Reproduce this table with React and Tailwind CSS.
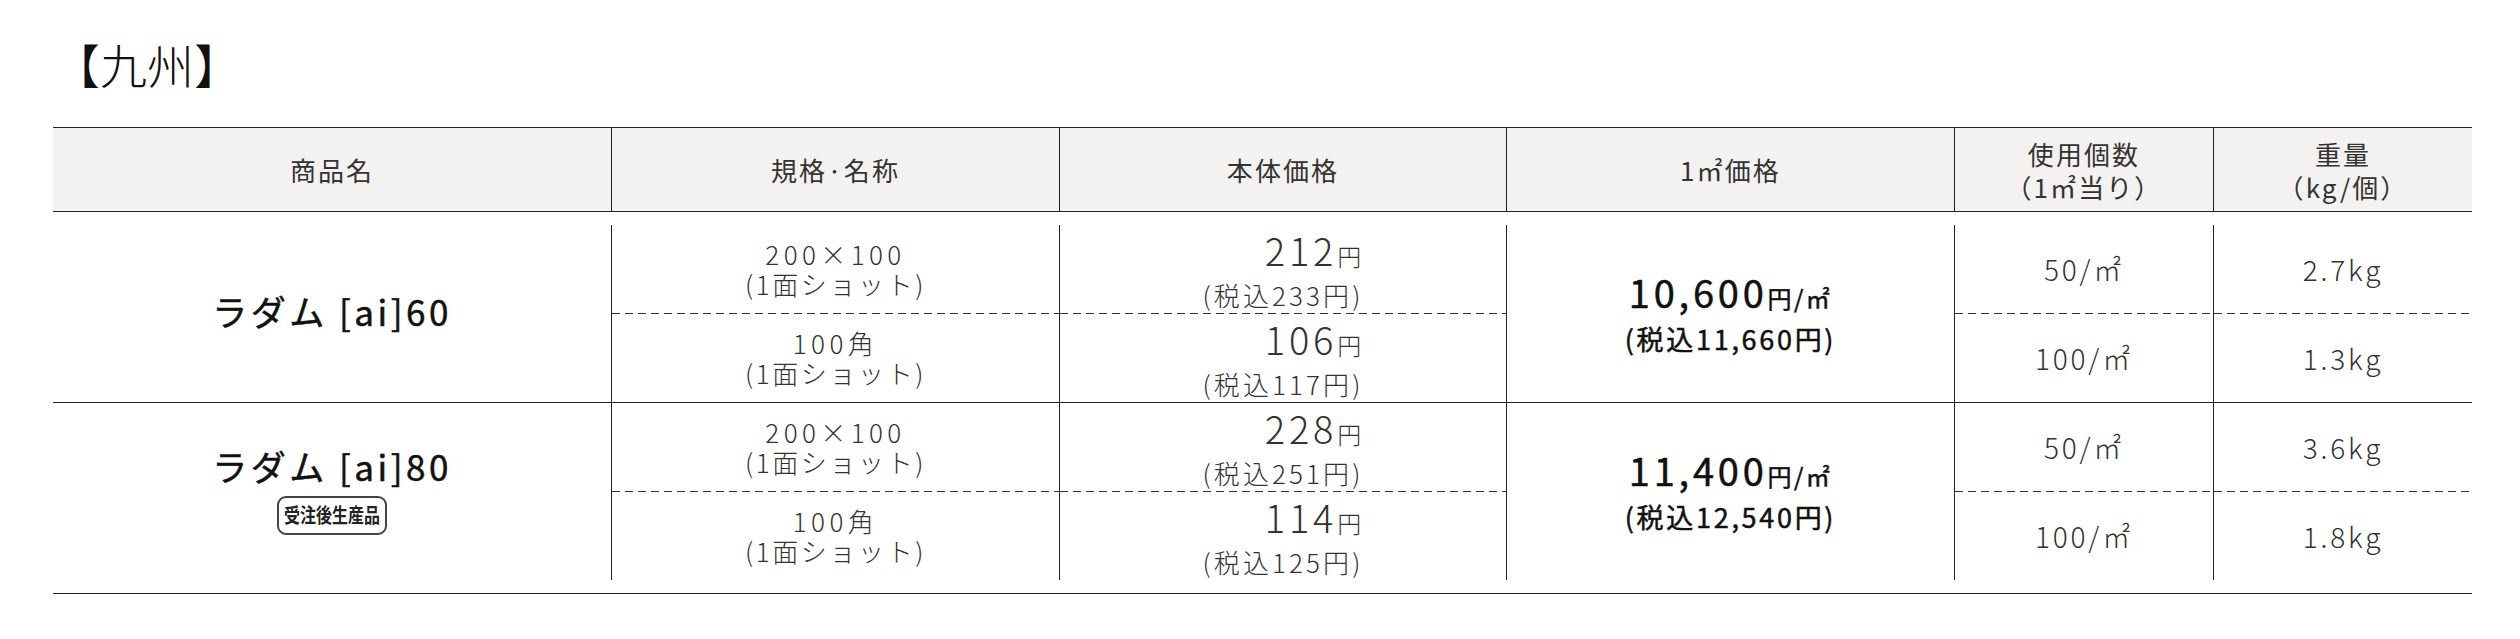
const cols = 'grid grid-cols-[558px_448px_447px_448px_259px_259px]';

const rows = [
  {
    name: 'ラダム [ai]60',
    badge: false,
    sqm: '10,600',
    sqmTax: '11,660',
    subs: [
      { spec: '200×100', price: '212', tax: '233', count: '50', weight: '2.7kg' },
      { spec: '100角', price: '106', tax: '117', count: '100', weight: '1.3kg' },
    ],
  },
  {
    name: 'ラダム [ai]80',
    badge: true,
    sqm: '11,400',
    sqmTax: '12,540',
    subs: [
      { spec: '200×100', price: '228', tax: '251', count: '50', weight: '3.6kg' },
      { spec: '100角', price: '114', tax: '125', count: '100', weight: '1.8kg' },
    ],
  },
];

function Dashed() {
  return (
    <div className="h-px shrink-0 bg-[linear-gradient(to_right,#333_8px,transparent_8px)] bg-[length:13px_1px]" />
  );
}

// two stacked cells split by a dashed rule
function Split({ render, subs }) {
  return (
    <div className="flex flex-col border-l border-[#222]">
      <div className="flex flex-1 items-center justify-center">{render(subs[0])}</div>
      <Dashed />
      <div className="flex flex-1 items-center justify-center">{render(subs[1])}</div>
    </div>
  );
}

function Spec({ spec }) {
  return (
    <div className="text-center text-[26px] leading-[30px] font-light text-[#333]">
      <div className="tracking-[0.17em]">{spec}</div>
      <div className="tracking-[0.1em]">(1面ショット)</div>
    </div>
  );
}

function Price({ price, tax }) {
  return (
    <div className="flex flex-col items-end font-light text-[#333]">
      <div className="leading-[42px]">
        <span className="text-[38px] tracking-[0.1em]">{price}</span>
        <span className="text-[24px] tracking-[0.1em]">円</span>
      </div>
      <div className="text-[26px] leading-[30px] tracking-[0.12em]">(税込{tax}円)</div>
    </div>
  );
}

function Row({ row }) {
  return (
    <div className={`${cols} h-[177px]`}>
      <div className="flex flex-col items-center justify-center pb-[5px]">
        <div className="text-[35px] leading-[44px] font-normal tracking-[0.1em] text-[#111] [-webkit-text-stroke:0.5px_#111]">
          {row.name}
        </div>
        {row.badge && (
          <div className="mt-2 flex h-[39px] w-[110px] items-center justify-center rounded-[9px] border-2 border-[#444]">
            <span className="inline-block scale-x-[0.8] whitespace-nowrap text-[20px] font-bold text-[#222]">
              受注後生産品
            </span>
          </div>
        )}
      </div>
      <Split subs={row.subs} render={(s) => <Spec spec={s.spec} />} />
      <Split subs={row.subs} render={(s) => <Price price={s.price} tax={s.tax} />} />
      <div className="flex flex-col items-center justify-center border-l border-[#222] font-normal text-[#111] [-webkit-text-stroke:0.5px_#111]">
        <div className="leading-[42px]">
          <span className="text-[38px] tracking-[0.1em]">{row.sqm}</span>
          <span className="text-[24px] tracking-[0.1em]">円/㎡</span>
        </div>
        <div className="text-[27px] leading-[34px] tracking-[0.1em]">(税込{row.sqmTax}円)</div>
      </div>
      <Split
        subs={row.subs}
        render={(s) => <div className="text-[28px] font-light tracking-[0.1em] text-[#333]">{s.count}/㎡</div>}
      />
      <Split
        subs={row.subs}
        render={(s) => <div className="text-[28px] font-light tracking-[0.1em] text-[#333]">{s.weight}</div>}
      />
    </div>
  );
}

export default function App() {
  const heads = ['商品名', '規格·名称', '本体価格', '1㎡価格', '使用個数\n（1㎡当り）', '重量\n（kg/個）'];

  return (
    <div className="min-h-[639px] bg-white pl-[53px] font-['Noto_Sans_CJK_JP','Noto_Sans',sans-serif]">
      <h1 className="pt-[38px] text-[47px] leading-[52px] font-light text-[#111]">【九州】</h1>

      <div className="mt-[37px] w-[2419px]">
        <div className={`${cols} h-[85px] border-y border-[#222] bg-[#f3f2f0]`}>
          {heads.map((h, i) => (
            <div
              key={h}
              className={`flex items-center justify-center whitespace-pre-line text-center text-[26px] leading-[33px] tracking-[0.08em] text-[#333] ${
                i > 0 ? 'border-l border-[#222]' : ''
              }`}
            >
              {h}
            </div>
          ))}
        </div>

        <div className="border-b border-[#222] pt-[13px] pb-[13px]">
          <Row row={rows[0]} />
          <div className="h-px bg-[#222]" />
          <Row row={rows[1]} />
        </div>
      </div>
    </div>
  );
}
